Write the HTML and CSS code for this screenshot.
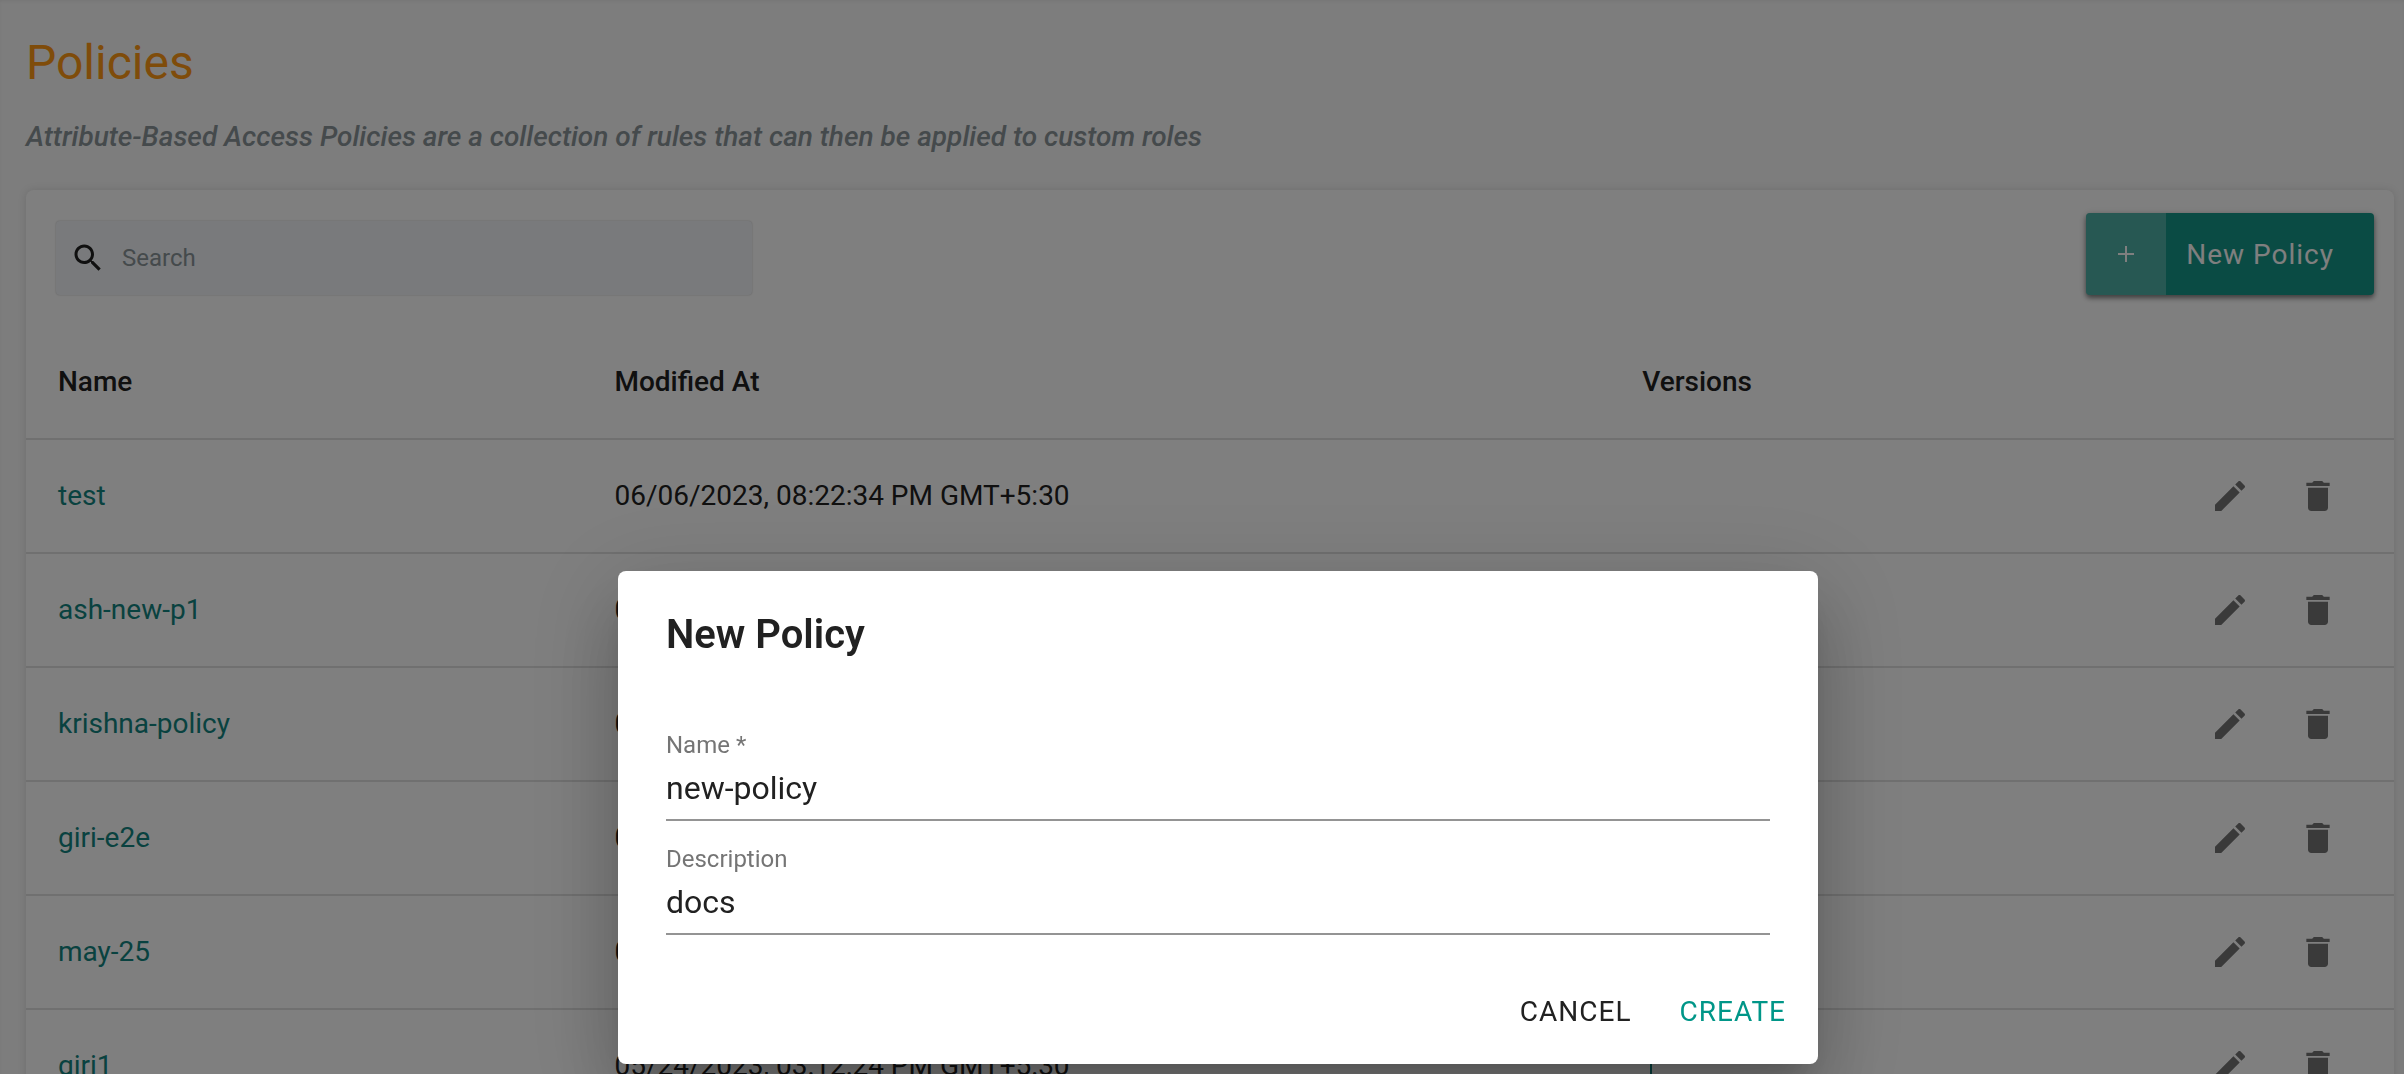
FILE: index.html
```html
<!DOCTYPE html>
<html lang="en">
<head>
    <meta charset="UTF-8">
    <meta name="viewport" content="width=device-width, initial-scale=1.0">
    <title>Policies</title>
    <link rel="stylesheet" href="styles.css">
</head>
<body>
  <!-- Icons shared by every row -->
  <svg class="icon-defs" aria-hidden="true">
    <symbol id="icon-edit" viewBox="0 0 24 24">
      <path d="M3 17.25V21h3.75L17.81 9.94l-3.75-3.75L3 17.25zM20.71 7.04c.39-.39.39-1.02 0-1.41l-2.34-2.34c-.39-.39-1.02-.39-1.41 0l-1.83 1.83 3.75 3.75 1.83-1.83z"/>
    </symbol>
    <symbol id="icon-delete" viewBox="0 0 24 24">
      <path d="M6 19c0 1.100.9 2 2 2h8c1.100 0 2-.9 2-2V7H6v12zM19 4h-3.500l-1-1h-5l-1 1H5v2h14V4z"/>
    </symbol>
    <symbol id="icon-search" viewBox="0 0 24 24">
      <path d="M15.500 14h-.79l-.28-.27C15.410 12.590 16 11.110 16 9.500 16 5.910 13.090 3 9.500 3S3 5.910 3 9.500 5.910 16 9.500 16c1.610 0 3.090-.59 4.230-1.570l.27.28v.79l5 4.990L20.490 19l-4.990-5zm-6 0C7.010 14 5 11.990 5 9.500S7.010 5 9.500 5 14 7.010 14 9.500 11.990 14 9.500 14z"/>
    </symbol>
  </svg>

  <main class="page">
    <h1>Policies</h1>
    <p class="subtitle">Attribute-Based Access Policies are a collection of rules that can then be applied to custom roles</p>

    <section class="card">
      <div class="toolbar">
        <label class="search">
          <svg class="search-icon" aria-hidden="true"><use href="#icon-search"/></svg>
          <input type="text" placeholder="Search" aria-label="Search">
        </label>
        <button class="btn-new" type="button">
          <span class="btn-new-icon">
            <svg viewBox="0 0 18 18" aria-hidden="true"><path d="M9 1v16M1 9h16"/></svg>
          </span>
          <span class="btn-new-label">New Policy</span>
        </button>
      </div>

      <table class="policies">
        <thead>
          <tr>
            <th class="col-name">Name</th>
            <th class="col-modified">Modified At</th>
            <th class="col-versions">Versions</th>
            <th class="col-actions"></th>
          </tr>
        </thead>
        <tbody>
          <tr>
            <td><a href="#">test</a></td>
            <td>06/06/2023, 08:22:34 PM GMT+5:30</td>
            <td></td>
            <td class="actions">
              <div class="action-group">
                <button type="button" aria-label="Edit"><svg><use href="#icon-edit"/></svg></button>
                <button type="button" aria-label="Delete"><svg><use href="#icon-delete"/></svg></button>
              </div>
            </td>
          </tr>
          <tr>
            <td><a href="#">ash-new-p1</a></td>
            <td>0</td>
            <td></td>
            <td class="actions">
              <div class="action-group">
                <button type="button" aria-label="Edit"><svg><use href="#icon-edit"/></svg></button>
                <button type="button" aria-label="Delete"><svg><use href="#icon-delete"/></svg></button>
              </div>
            </td>
          </tr>
          <tr>
            <td><a href="#">krishna-policy</a></td>
            <td>0</td>
            <td></td>
            <td class="actions">
              <div class="action-group">
                <button type="button" aria-label="Edit"><svg><use href="#icon-edit"/></svg></button>
                <button type="button" aria-label="Delete"><svg><use href="#icon-delete"/></svg></button>
              </div>
            </td>
          </tr>
          <tr>
            <td><a href="#">giri-e2e</a></td>
            <td>0</td>
            <td></td>
            <td class="actions">
              <div class="action-group">
                <button type="button" aria-label="Edit"><svg><use href="#icon-edit"/></svg></button>
                <button type="button" aria-label="Delete"><svg><use href="#icon-delete"/></svg></button>
              </div>
            </td>
          </tr>
          <tr>
            <td><a href="#">may-25</a></td>
            <td>0</td>
            <td></td>
            <td class="actions">
              <div class="action-group">
                <button type="button" aria-label="Edit"><svg><use href="#icon-edit"/></svg></button>
                <button type="button" aria-label="Delete"><svg><use href="#icon-delete"/></svg></button>
              </div>
            </td>
          </tr>
          <tr>
            <td><a href="#">giri1</a></td>
            <td>05/24/2023, 03:12:24 PM GMT+5:30</td>
            <td><span class="version-line"></span></td>
            <td class="actions">
              <div class="action-group">
                <button type="button" aria-label="Edit"><svg><use href="#icon-edit"/></svg></button>
                <button type="button" aria-label="Delete"><svg><use href="#icon-delete"/></svg></button>
              </div>
            </td>
          </tr>
        </tbody>
      </table>
    </section>
  </main>

  <div class="overlay">
    <form class="dialog" role="dialog" aria-modal="true" aria-labelledby="dialogTitle">
      <h2 id="dialogTitle">New Policy</h2>
      <div class="field">
        <label for="policyName">Name *</label>
        <input type="text" id="policyName" value="new-policy">
      </div>
      <div class="field">
        <label for="policyDescription">Description</label>
        <input type="text" id="policyDescription" value="docs">
      </div>
      <div class="dialog-actions">
        <button class="btn-text" type="button">CANCEL</button>
        <button class="btn-text btn-create" type="button">CREATE</button>
      </div>
    </form>
  </div>
</body>
</html>
```
FILE: styles.css
```css
* {
    margin: 0;
    padding: 0;
    box-sizing: border-box;
}

body {
    font-family: Roboto, "Liberation Sans", sans-serif;
    font-size: 28px;
    line-height: 32px;
    background: #fafafa;
    color: #212121;
    height: 100vh;
    overflow: hidden;
}

button,
input {
    font-family: inherit;
    font-size: inherit;
    color: inherit;
    border: none;
    background: none;
    outline: none;
}

button {
    cursor: pointer;
    letter-spacing: 1px;
}

.icon-defs {
    display: none;
}

.page {
    padding: 35px 10px 0 26px;
    box-shadow: inset 0 2px 4px -2px rgba(0, 0, 0, 0.1);
}

h1 {
    font-size: 48px;
    font-weight: 400;
    line-height: 56px;
    color: #ff9914;
    margin-bottom: 30px;
}

.subtitle {
    font-style: italic;
    font-weight: 500;
    color: #8a9499;
    margin-bottom: 37px;
}

.card {
    background: #fff;
    border-radius: 8px;
    box-shadow: 0 0 8px rgba(0, 0, 0, 0.12);
}

/* Search and new policy */
.toolbar {
    display: flex;
    align-items: flex-end;
    justify-content: space-between;
    padding: 23px 20px 31px 30px;
}

.search {
    display: flex;
    align-items: center;
    gap: 16px;
    width: 696px;
    height: 74px;
    padding: 0 14px;
    background: #f2f5f8;
    border-radius: 4px;
    box-shadow: 0 0 2px rgba(0, 0, 0, 0.25);
}

.search-icon {
    flex: none;
    width: 36px;
    height: 36px;
    fill: #212121;
}

.search input {
    flex: 1;
    font-size: 24px;
}

.search input::placeholder {
    color: #8a9499;
    opacity: 1;
}

.btn-new {
    display: flex;
    height: 82px;
    border-radius: 4px;
    overflow: hidden;
    background: #149688;
    color: #fff;
    box-shadow: 0 3px 5px rgba(0, 0, 0, 0.45), 0 1px 8px rgba(0, 0, 0, 0.15);
}

.btn-new-icon {
    display: flex;
    align-items: center;
    justify-content: center;
    width: 80px;
    height: 100%;
    background: rgba(255, 255, 255, 0.25);
}

.btn-new-icon svg {
    width: 18px;
    height: 18px;
    stroke: #fff;
    stroke-width: 2;
}

.btn-new-label {
    align-self: center;
    padding: 0 40px 0 20px;
}

/* Table */
.policies {
    width: 100%;
    table-layout: fixed;
    border-collapse: separate;
    border-spacing: 0;
}

.policies th,
.policies td {
    height: 114px;
    padding: 0 32px;
    text-align: left;
    border-bottom: 2px solid #e0e0e0;
}

.policies th {
    font-weight: 500;
}

.col-name {
    width: 23.5%;
}

.col-modified {
    width: 43.4%;
}

.policies a {
    color: #128480;
    text-decoration: none;
}

.action-group {
    display: flex;
    justify-content: flex-end;
}

.action-group button {
    padding: 24px;
}

.action-group svg {
    display: block;
    width: 40px;
    height: 40px;
    fill: #757575;
}

.version-line {
    display: block;
    width: 2px;
    height: 64px;
    margin-left: 8px;
    background: #128480;
}

/* Dialog */
.overlay {
    position: fixed;
    inset: 0;
    display: flex;
    align-items: flex-end;
    justify-content: center;
    padding: 0 0 10px 32px;
    background: rgba(0, 0, 0, 0.5);
}

.dialog {
    width: 1200px;
    padding: 32px 48px 17px;
    background: #fff;
    border-radius: 8px;
    box-shadow:
        0 22px 30px -14px rgba(0, 0, 0, 0.2),
        0 48px 76px 6px rgba(0, 0, 0, 0.14),
        0 18px 92px 16px rgba(0, 0, 0, 0.12);
}

h2 {
    font-size: 40px;
    font-weight: 600;
    line-height: 64px;
    margin-bottom: 64px;
}

.field {
    display: flex;
    flex-direction: column;
    gap: 8px;
    margin-bottom: 24px;
}

.field label {
    font-size: 24px;
    line-height: 28px;
    color: #757575;
}

.field input {
    width: 100%;
    height: 54px;
    padding-bottom: 10px;
    font-size: 32px;
    border-bottom: 2px solid #949494;
}

.dialog-actions {
    display: flex;
    justify-content: flex-end;
    gap: 16px;
    margin: 40px -32px 0 0;
}

.btn-text {
    height: 72px;
    padding: 0 16px;
}

.btn-create {
    color: #009688;
}
```
